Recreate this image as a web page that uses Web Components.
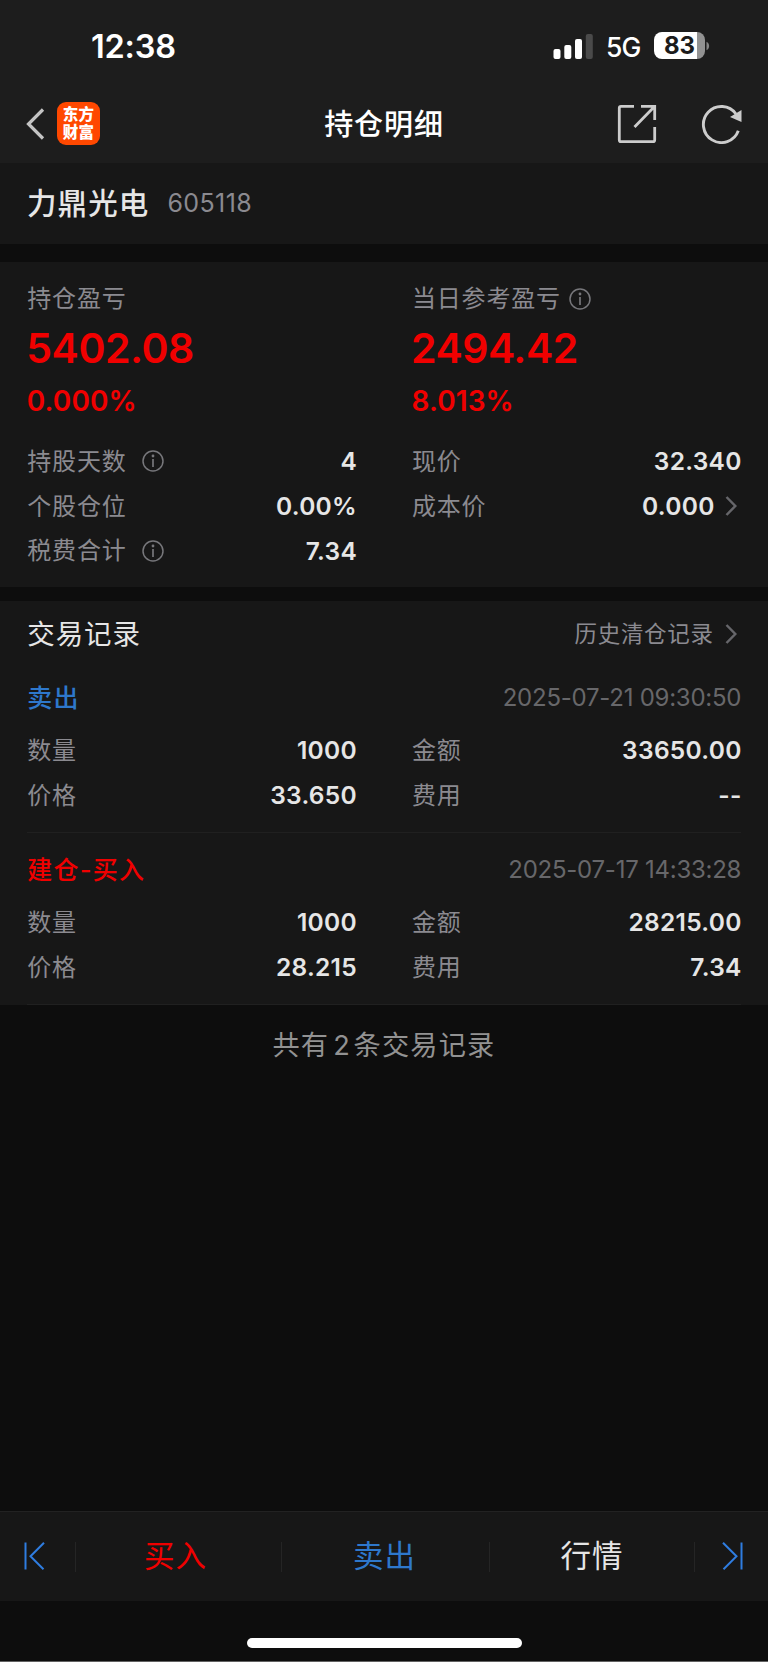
<!DOCTYPE html>
<html lang="zh-CN">
<head>
<meta charset="utf-8">
<title>持仓明细</title>
<style>
  html, body { margin: 0; background: #0d0d0d; }
  body {
    font-family: Inter, "Noto Sans CJK SC", sans-serif;
    color: #e6e6e6;
    --bar: #1d1d1d;
    --panel: #171717;
    --line: #202020;
    --muted: #8b8a90;
    --red: #f00000;
    --blue: #2e78cc;
  }
</style>
</head>
<body>
<holding-page>
  <status-bar time="12:38" network="5G" battery="83"></status-bar>
  <nav-bar>持仓明细</nav-bar>
  <stock-title code="605118">力鼎光电</stock-title>
  <profit-panel>
    <profit-item label="持仓盈亏" value="5402.08" rate="0.000%"></profit-item>
    <profit-item label="当日参考盈亏" value="2494.42" rate="8.013%" info></profit-item>
    <stat-row label="持股天数" value="4" info></stat-row>
    <stat-row label="现价" value="32.340"></stat-row>
    <stat-row label="个股仓位" value="0.00%"></stat-row>
    <stat-row label="成本价" value="0.000" more></stat-row>
    <stat-row label="税费合计" value="7.34" info></stat-row>
  </profit-panel>
  <record-list heading="交易记录" link="历史清仓记录">
    <trade-record type="sell" label="卖出" time="2025-07-21 09:30:50">
      <stat-row label="数量" value="1000"></stat-row>
      <stat-row label="金额" value="33650.00"></stat-row>
      <stat-row label="价格" value="33.650"></stat-row>
      <stat-row label="费用" value="--"></stat-row>
    </trade-record>
    <trade-record type="buy" label="建仓-买入" time="2025-07-17 14:33:28">
      <stat-row label="数量" value="1000"></stat-row>
      <stat-row label="金额" value="28215.00"></stat-row>
      <stat-row label="价格" value="28.215"></stat-row>
      <stat-row label="费用" value="7.34"></stat-row>
    </trade-record>
  </record-list>
  <record-count count="2"></record-count>
  <action-bar></action-bar>
  <home-indicator></home-indicator>
</holding-page>

<script>
function define(name, render) {
  customElements.define(name, class extends HTMLElement {
    connectedCallback() {
      if (this.shadowRoot) return;
      this.attachShadow({ mode: "open" }).innerHTML = render(this);
    }
  });
}

const attr = (el, name) => el.getAttribute(name) || "";

define("holding-page", () => `
  <style>
    :host { display: flex; flex-direction: column; height: 1662px; width: 768px; box-sizing: border-box; border-bottom: 1px solid #626262; overflow: hidden; }
  </style>
  <slot></slot>
`);

define("status-bar", el => `
  <style>
    :host { display: flex; align-items: center; height: 93px; flex: none; background: var(--bar); color: #fff; padding: 0 58px 0 91px; box-sizing: border-box; }
    .time { flex: 1; font-size: 32.5px; font-weight: 600; line-height: 40px; letter-spacing: -0.2px; }
    .net { margin: 1px 13px 0 13px; font-size: 26.5px; font-weight: 500; line-height: 32px; letter-spacing: -0.9px; width: 35px; }
    .battery { display: flex; align-items: center; margin-top: -2px; }
    .cell { width: 51px; height: 27px; border-radius: 8px; background: linear-gradient(to right, #fff 42.5px, #929292 42.5px); color: #1b1b1b; font-size: 24px; font-weight: 700; line-height: 28px; text-align: center; }
    svg { display: block; }
  </style>
  <span class="time">${attr(el, "time")}</span>
  <svg width="40" height="26" viewBox="0 0 40 26">
    <rect x="0.5" y="15" width="7" height="10" rx="2" fill="#fff"/>
    <rect x="11.3" y="11" width="7" height="14" rx="2" fill="#fff"/>
    <rect x="22" y="5" width="7" height="20" rx="2" fill="#fff"/>
    <rect x="32.8" y="0" width="7" height="25" rx="2" fill="#4a4a4a"/>
  </svg>
  <span class="net">${attr(el, "network")}</span>
  <div class="battery">
    <div class="cell">${attr(el, "battery")}</div>
    <svg width="5" height="10" viewBox="0 0 5 10"><path d="M1.5 .7C5 2.5 5 7.5 1.5 9.3Z" fill="#858585"/></svg>
  </div>
`);

define("nav-bar", () => `
  <style>
    :host { display: grid; grid-template-columns: 1fr auto 1fr; align-items: center; height: 70px; flex: none; background: var(--bar); padding: 0 25px; box-sizing: border-box; }
    svg { display: block; }
    .left { display: flex; align-items: center; gap: 12px; }
    .logo { width: 43px; height: 43px; border-radius: 9px; background: #ff4800; color: #fff; font: 900 15.5px "Liberation Sans", "Noto Sans CJK SC", sans-serif; text-align: center; box-sizing: border-box; padding-top: 4px; }
    .logo div { height: 18px; line-height: 18px; letter-spacing: .2px; }
    .title { font-size: 29px; font-weight: 500; line-height: 40px; letter-spacing: .9px; color: #fff; margin-top: -6px; }
    .left, .right { margin-top: -8.5px; }
    .right { display: flex; justify-content: flex-end; gap: 44px; }
  </style>
  <div class="left">
    <svg width="20" height="34" viewBox="0 0 20 34"><path d="M18 2.500 3.500 17 18 31.500" fill="none" stroke="#c4c4c4" stroke-width="3.200"/></svg>
    <div class="logo"><div>东方</div><div>财富</div></div>
  </div>
  <div class="title"><slot></slot></div>
  <div class="right">
    <svg width="40" height="40" viewBox="0 0 40 40" fill="none" stroke="#ccc" stroke-width="2.8">
      <path d="M17 2.3H4Q2.3 2.3 2.3 4v32q0 1.700 1.700 1.700h32q1.700 0 1.700-1.700V23M24 2.300h13.700V16M37 3 17.500 23"/>
    </svg>
    <svg width="42" height="40" viewBox="0 0 42 40">
      <path d="M37.300 26.700A18 18 0 1 1 35 10" fill="none" stroke="#ccc" stroke-width="2.900"/>
      <path d="M29 13 40.500 6V18Z" fill="#ccc"/>
    </svg>
  </div>
`);

define("stock-title", el => `
  <style>
    :host { display: flex; align-items: center; height: 81px; flex: none; background: var(--panel); padding: 0 27px 2px; gap: 18px; box-sizing: border-box; margin-bottom: 18px; }
    .name { font-size: 29.5px; font-weight: 500; line-height: 40px; letter-spacing: 1.1px; }
    .code { font-size: 25px; line-height: 40px; color: var(--muted); letter-spacing: .4px; }
  </style>
  <span class="name"><slot></slot></span>
  <span class="code">${attr(el, "code")}</span>
`);

define("info-icon", () => `
  <style>
    :host { display: block; width: 22px; height: 22px; }
    svg { display: block; }
  </style>
  <svg width="22" height="22" viewBox="0 0 22 22">
    <circle cx="11" cy="11" r="10" fill="none" stroke="#77777b" stroke-width="1.500"/>
    <path d="M11 9v8" stroke="#77777b" stroke-width="1.700"/>
    <circle cx="11" cy="6" r="1.400" fill="#77777b"/>
  </svg>
`);

define("more-icon", () => `
  <style>
    :host { display: block; width: 12px; height: 20px; }
    svg { display: block; }
  </style>
  <svg width="12" height="20" viewBox="0 0 12 20"><path d="M1.500 1 10.300 10 1.500 19" fill="none" stroke="#66666a" stroke-width="2.500"/></svg>
`);

define("profit-panel", () => `
  <style>
    :host { display: grid; grid-template-columns: 1fr 1fr; column-gap: 56px; grid-template-rows: 158px repeat(3, 44.7px); height: 325px; flex: none; background: var(--panel); padding: 19px 27.300px 0; box-sizing: border-box; margin-bottom: 14px; }
  </style>
  <slot></slot>
`);

define("profit-item", el => `
  <style>
    :host { display: block; }
    .label { display: flex; align-items: center; gap: 8.500px; height: 35px; line-height: 35px; font-size: 24px; letter-spacing: .8px; color: var(--muted); }
    .value { height: 65px; line-height: 65px; font-size: 41px; font-weight: 600; letter-spacing: -0.5px; color: var(--red); margin-left: -1px; }
    .rate { height: 40px; line-height: 40px; font-size: 28px; font-weight: 600; letter-spacing: .1px; color: var(--red); margin-left: -0.5px; }
  </style>
  <div class="label"><span>${attr(el, "label")}</span>${el.hasAttribute("info") ? "<info-icon></info-icon>" : ""}</div>
  <div class="value">${attr(el, "value")}</div>
  <div class="rate">${attr(el, "rate")}</div>
`);

define("stat-row", el => `
  <style>
    :host { display: flex; align-items: center; height: 44.7px; line-height: 34px; }
    .label { font-size: 24px; letter-spacing: .8px; color: var(--muted); margin-top: 1px; }
    info-icon { margin-left: 15px; }
    .value { margin: 0 -1px 0 auto; font-size: 24.5px; font-weight: 600; letter-spacing: .3px; }
    more-icon { margin: 0 4px 0 11px; }
  </style>
  <span class="label">${attr(el, "label")}</span>
  ${el.hasAttribute("info") ? "<info-icon></info-icon>" : ""}
  <span class="value">${attr(el, "value")}</span>
  ${el.hasAttribute("more") ? "<more-icon></more-icon>" : ""}
`);

define("record-list", el => `
  <style>
    :host { display: block; height: 403.500px; flex: none; background: var(--panel); padding: 0 27.300px; box-sizing: border-box; }
    header { display: flex; align-items: center; height: 66px; line-height: 34px; }
    .heading { flex: 1; font-size: 27.500px; letter-spacing: .9px; }
    .link { font-size: 22.500px; letter-spacing: .7px; color: var(--muted); }
    more-icon { margin: 0 4px 0 11px; }
  </style>
  <header>
    <span class="heading">${attr(el, "heading")}</span>
    <span class="link">${attr(el, "link")}</span>
    <more-icon></more-icon>
  </header>
  <slot></slot>
`);

define("trade-record", el => `
  <style>
    :host { display: block; height: 172px; box-sizing: border-box; border-bottom: 1px solid var(--line); }
    :host([type="sell"]) { --type: var(--blue); height: 166px; }
    :host([type="buy"]) { --type: var(--red); }
    .top { display: flex; align-items: center; justify-content: space-between; height: 61px; line-height: 34px; box-sizing: border-box; }
    :host([type="buy"]) .top { height: 67px; padding-top: 6px; }
    .type { font-size: 25px; font-weight: 500; letter-spacing: 1.300px; color: var(--type); }
    .time { font-size: 24px; color: #67676a; letter-spacing: -0.25px; margin-right: -0.5px; }
    .grid { display: grid; grid-template-columns: 1fr 1fr; column-gap: 56px; }
  </style>
  <div class="top">
    <span class="type">${attr(el, "label")}</span>
    <span class="time">${attr(el, "time")}</span>
  </div>
  <div class="grid"><slot></slot></div>
`);

define("record-count", el => `
  <style>
    :host { display: block; flex: 1; padding-top: 21px; text-align: center; font-size: 27.200px; line-height: 40px; letter-spacing: 1.200px; color: #929292; }
    span { margin: 0 2.500px 0 4px; }
  </style>共有<span>${attr(el, "count")}</span>条交易记录
`);

define("action-bar", () => `
  <style>
    :host { display: grid; grid-template-columns: 74.500px 206px 208px 205px 74.500px; align-items: center; height: 90px; flex: none; background: var(--panel); border-top: 1px solid #222; box-sizing: border-box; font-size: 30.500px; line-height: 28px; letter-spacing: 1px; }
    div { display: flex; justify-content: center; height: 30px; box-sizing: border-box; }
    div + div { border-left: 1px solid #252525; }
    svg { display: block; }
    .prev { padding-right: 4px; }
    .next { padding-left: 2px; }
    .buy { color: var(--red); padding-right: 5px; }
    .sell { color: var(--blue); padding-right: 1px; }
    .quote { padding-left: 1px; }
  </style>
  <div class="prev"><svg width="22" height="28" viewBox="0 0 22 28" fill="none" stroke="#2f7de0" stroke-width="2"><path d="M1.500 .5v27M20 .8 6.500 14.300 19.500 27.300"/></svg></div>
  <div class="buy">买入</div>
  <div class="sell">卖出</div>
  <div class="quote">行情</div>
  <div class="next"><svg width="22" height="28" viewBox="0 0 22 28" fill="none" stroke="#2f7de0" stroke-width="2"><path d="M20.500 .5v27M2 .8 15.500 14.300 2.500 27.300"/></svg></div>
`);

define("home-indicator", () => `
  <style>
    :host { display: flex; justify-content: center; height: 60px; flex: none; padding-top: 37px; box-sizing: border-box; }
    i { display: block; width: 275px; height: 10px; border-radius: 5px; background: #fff; }
  </style>
  <i></i>
`);
</script>
</body>
</html>
